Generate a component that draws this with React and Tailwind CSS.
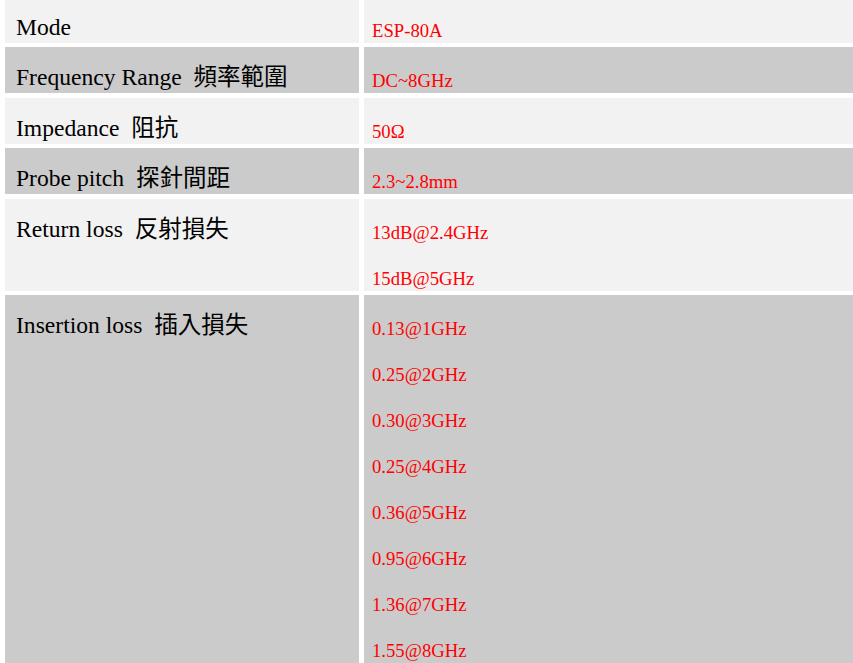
import React from "react";

const rows = [
  { en: "Mode", zh: "", values: ["ESP-80A"], bg: "bg-[#f2f2f2]" },
  { en: "Frequency Range", zh: "頻率範圍", values: ["DC~8GHz"], bg: "bg-[#cbcbcb]" },
  { en: "Impedance", zh: "阻抗", values: ["50Ω"], bg: "bg-[#f2f2f2]" },
  { en: "Probe pitch", zh: "探針間距", values: ["2.3~2.8mm"], bg: "bg-[#cbcbcb]" },
  { en: "Return loss", zh: "反射損失", values: ["13dB@2.4GHz", "15dB@5GHz"], bg: "bg-[#f2f2f2]" },
  {
    en: "Insertion loss",
    zh: "插入損失",
    values: [
      "0.13@1GHz",
      "0.25@2GHz",
      "0.30@3GHz",
      "0.25@4GHz",
      "0.36@5GHz",
      "0.95@6GHz",
      "1.36@7GHz",
      "1.55@8GHz",
    ],
    bg: "bg-[#cbcbcb]",
  },
];

export default function App() {
  return (
    <div className="w-[853px] h-[663px] overflow-hidden bg-white font-['Liberation_Serif','Noto_Sans_CJK_TC',serif]">
      <div className="-mt-[3.5px] pl-[5px] grid grid-cols-[354px_489px] gap-x-[5px] gap-y-[4.5px]">
        {rows.map((r, i) => (
          <React.Fragment key={i}>
            <div className={`${r.bg} pl-[11px] pt-[17px] text-[23.6px] leading-[26px] text-black whitespace-pre`}>
              {r.en}
              {r.zh ? (
                <>
                  {"  "}
                  <span className="font-['Noto_Sans_CJK_TC',sans-serif] text-[23.5px] leading-[16px] font-normal">
                    {r.zh}
                  </span>
                </>
              ) : null}
            </div>
            <div className={`${r.bg} pl-[8px] text-[18.7px] text-[#ff0000]`}>
              {r.values.map((v, j) => (
                <div key={j} className="pt-[23px] pb-[2px] leading-[21px]">
                  {v}
                </div>
              ))}
            </div>
          </React.Fragment>
        ))}
      </div>
    </div>
  );
}
